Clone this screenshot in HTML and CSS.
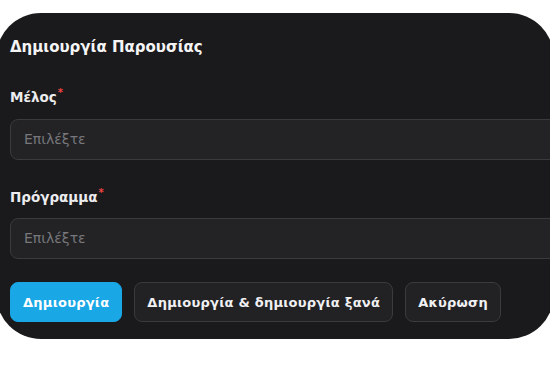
FILE: index.html
```html
<html>
    <head>
        <link rel="stylesheet" href="styles.css">
    </head>

    <body>
        <div class="card">
            <h1 class="title">Δημιουργία Παρουσίας</h1>

            <div class="field">
                <label class="label">Μέλος<span class="req">*</span></label>
                <div class="select">Επιλέξτε</div>
            </div>

            <div class="field">
                <label class="label">Πρόγραμμα<span class="req">*</span></label>
                <div class="select">Επιλέξτε</div>
            </div>

            <div class="actions">
                <button class="btn btn-primary" type="button">Δημιουργία</button>
                <button class="btn" type="button">Δημιουργία &amp; δημιουργία ξανά</button>
                <button class="btn" type="button">Ακύρωση</button>
            </div>
        </div>
    </body>
</html>
```

FILE: styles.css
```css
body {
    margin: 0;
    background-color: white;
    font-family: "DejaVu Sans", "Noto Sans", sans-serif;
    overflow: hidden;
}

.card {
    margin-top: 13px;
    margin-left: -4px;
    width: 558px;
    height: 326px;
    box-sizing: border-box;
    padding: 24px 0 0 14px;
    background-color: #1a1a1c;
    border-radius: 45px;
    overflow: hidden;
}

.title {
    margin: 0;
    font-size: 15px;
    line-height: 20px;
    font-weight: 700;
    color: #f4f4f5;
}

.field {
    margin-top: 31px;
}

.field + .field {
    margin-top: 28px;
}

.label {
    display: block;
    font-size: 13.5px;
    line-height: 18px;
    font-weight: 700;
    color: #ececee;
}

.req {
    position: relative;
    top: -6px;
    color: #ef4444;
    font-size: 10px;
    line-height: 0;
    margin-left: 1px;
}

.select {
    margin-top: 13px;
    width: 600px;
    height: 41px;
    box-sizing: border-box;
    padding-left: 13px;
    border: 1px solid #3b3b3e;
    border-radius: 8px;
    background-color: #232325;
    color: #77777c;
    font-size: 14px;
    line-height: 39px;
}

.field + .field .select {
    margin-top: 12px;
}

.actions {
    display: flex;
    gap: 12px;
    margin-top: 23px;
}

.btn {
    height: 40px;
    padding: 0 12px;
    border: 1px solid #3b3b3e;
    border-radius: 8px;
    background-color: #222224;
    color: #f1f1f3;
    font-family: inherit;
    font-size: 13px;
    font-weight: 700;
    letter-spacing: 0.25px;
}

.btn-primary {
    background-color: #19a7e6;
    border-color: #19a7e6;
    color: white;
}
```
